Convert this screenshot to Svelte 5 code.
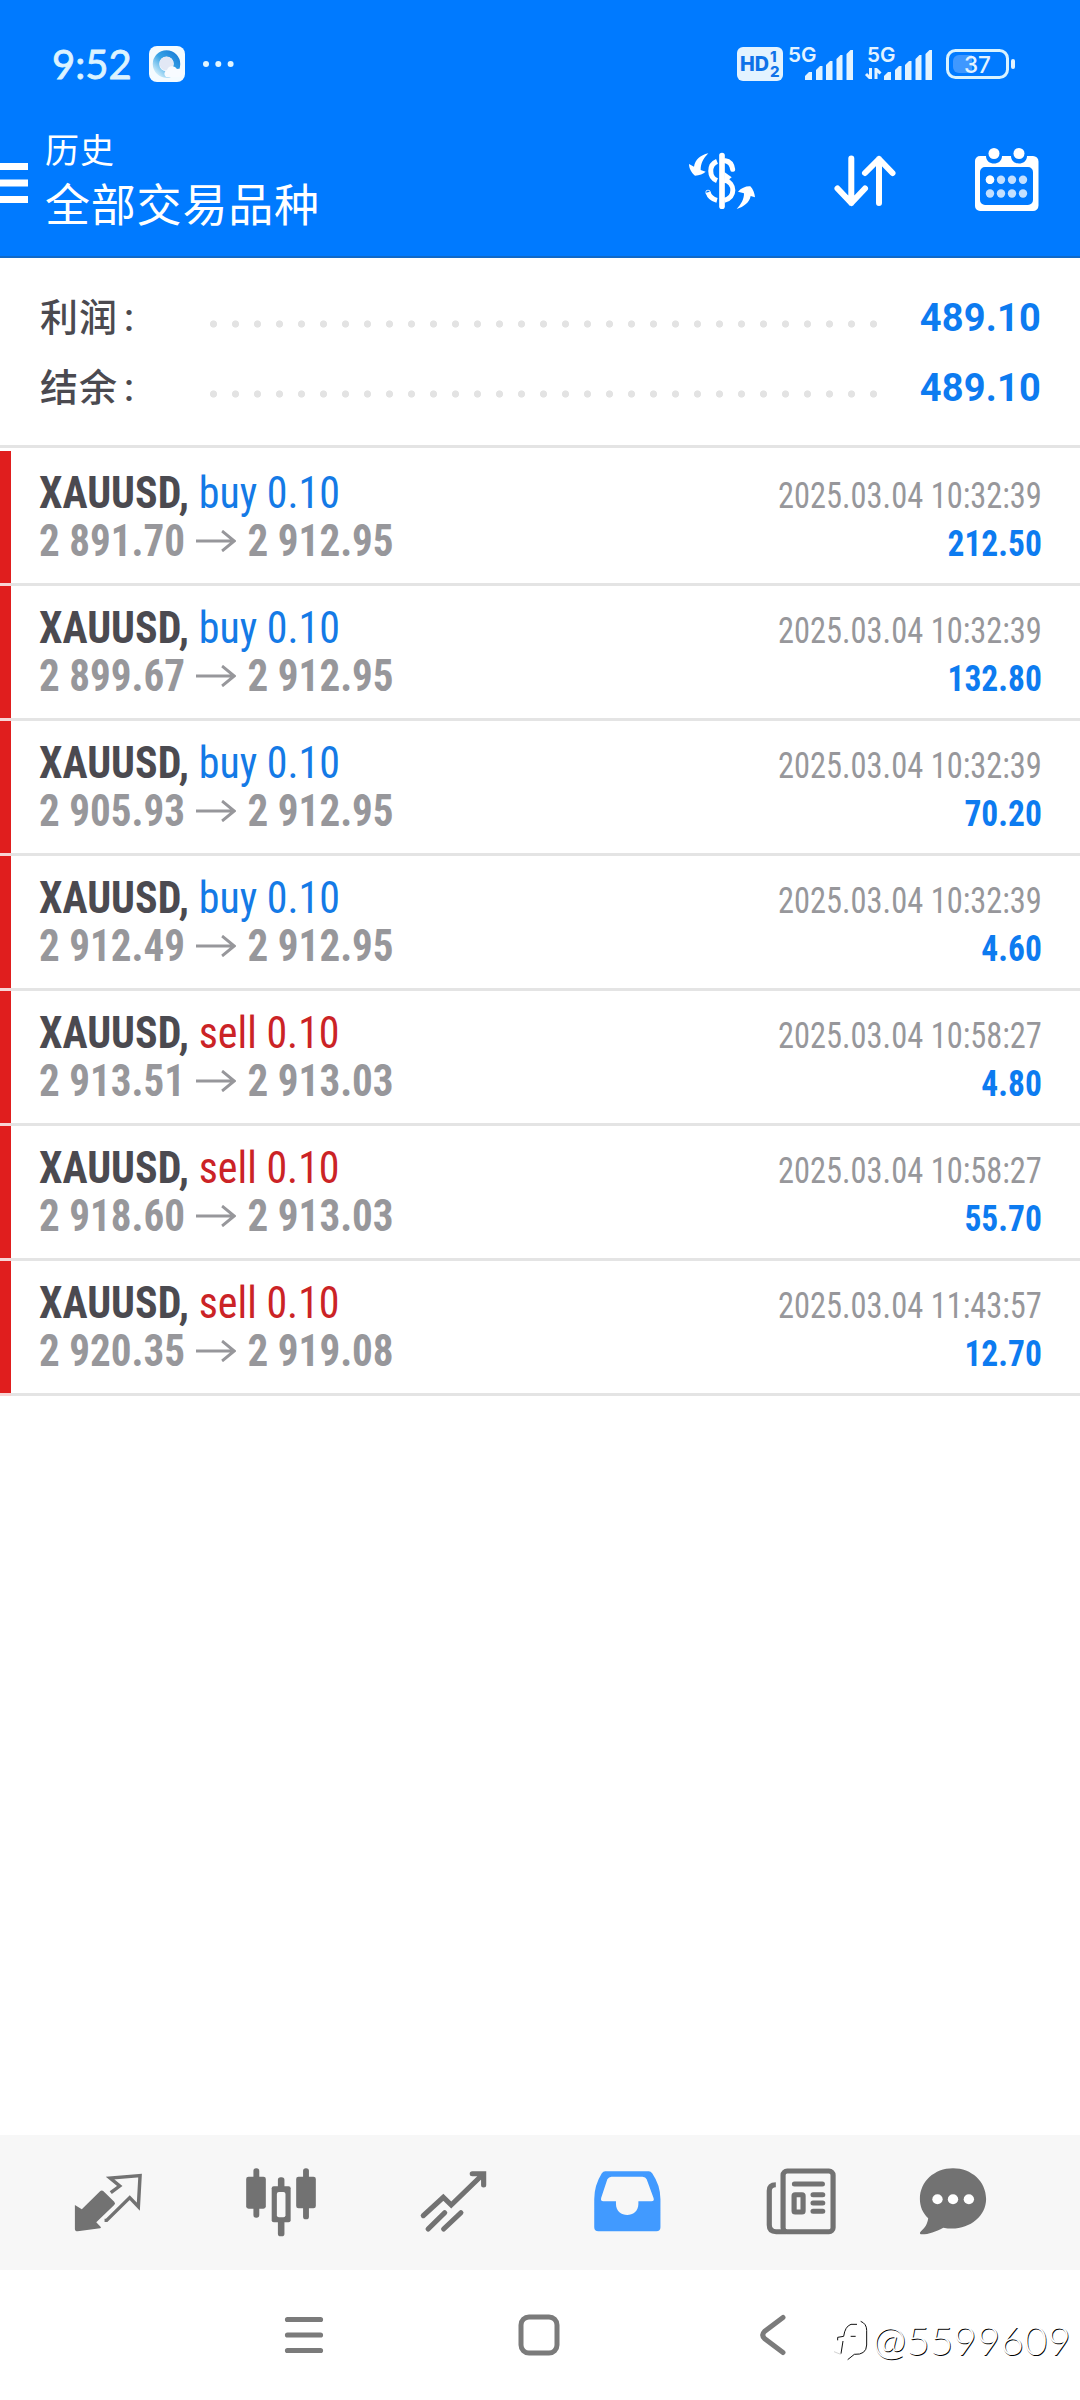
<script>
  const summary = [
    { label: '利润', value: '489.10' },
    { label: '结余', value: '489.10' },
  ];

  const deals = [
    { symbol: 'XAUUSD', side: 'buy', volume: '0.10', open: '2 891.70', close: '2 912.95', time: '2025.03.04 10:32:39', profit: '212.50' },
    { symbol: 'XAUUSD', side: 'buy', volume: '0.10', open: '2 899.67', close: '2 912.95', time: '2025.03.04 10:32:39', profit: '132.80' },
    { symbol: 'XAUUSD', side: 'buy', volume: '0.10', open: '2 905.93', close: '2 912.95', time: '2025.03.04 10:32:39', profit: '70.20' },
    { symbol: 'XAUUSD', side: 'buy', volume: '0.10', open: '2 912.49', close: '2 912.95', time: '2025.03.04 10:32:39', profit: '4.60' },
    { symbol: 'XAUUSD', side: 'sell', volume: '0.10', open: '2 913.51', close: '2 913.03', time: '2025.03.04 10:58:27', profit: '4.80' },
    { symbol: 'XAUUSD', side: 'sell', volume: '0.10', open: '2 918.60', close: '2 913.03', time: '2025.03.04 10:58:27', profit: '55.70' },
    { symbol: 'XAUUSD', side: 'sell', volume: '0.10', open: '2 920.35', close: '2 919.08', time: '2025.03.04 11:43:57', profit: '12.70' },
  ];
</script>

<div class="screen">
  <header>
    <div class="status">
      <span class="clock">9:52</span>
      <svg class="app-icon" viewBox="0 0 36 36">
        <defs>
          <linearGradient id="ring" x1="1" y1="0" x2="0" y2="1">
            <stop offset="0" stop-color="#1b7fd8" />
            <stop offset="0.5" stop-color="#38a4e6" />
            <stop offset="1" stop-color="#d8f1fb" />
          </linearGradient>
        </defs>
        <rect width="36" height="36" rx="8" fill="#f4fbff" />
        <circle cx="17.500" cy="18" r="10.500" fill="none" stroke="url(#ring)" stroke-width="6.500" />
        <circle cx="17.500" cy="17.500" r="7" fill="#e2e8f5" />
        <path d="M17 31a4 4 0 0 1 1-7a5.500 5.500 0 0 1 10-1a4 4 0 0 1 3 8z" fill="#f8fbff" />
      </svg>
      <svg class="more" viewBox="0 0 32 8" fill="#e2f6ff">
        <circle cx="4" cy="4" r="3" />
        <circle cx="16.300" cy="4" r="3" />
        <circle cx="28.600" cy="4" r="3" />
      </svg>
      <svg class="signals" viewBox="735 40 285 48" fill="#e3f3ff">
        <rect x="737" y="47" width="46" height="34" rx="6" />
        <text class="bold" x="740" y="71" font-size="20" textLength="29" lengthAdjust="spacingAndGlyphs" fill="#0f72e8">HD</text>
        <text class="bold" x="770" y="62" font-size="15" fill="#0f72e8">1</text>
        <text class="bold" x="770" y="77" font-size="15" fill="#0f72e8">2</text>
        <text x="788" y="62" font-size="20.500" textLength="28.500" lengthAdjust="spacingAndGlyphs">5G</text>
        <text x="867" y="62" font-size="20.500" textLength="28.500" lengthAdjust="spacingAndGlyphs">5G</text>
        {#each [0, 79] as dx}
          <g transform="translate({dx} 0)">
            <path d="M805 80v-4l4-4h3v8z" />
            <path d="M816 80v-10l4-4h2.500v14z" />
            <path d="M826 80v-15l4-4h2.500v19z" />
            <path d="M836.500 80v-21l4-4h2v25z" />
            <path d="M846.500 80v-26l4-4h2.500v30z" />
          </g>
        {/each}
        <path d="M870.500 68v11M866 74l4 4M876 79v-11M876 69l4.500 4.500" fill="none" stroke="#e3f3ff" stroke-width="3" />
        <rect x="947.500" y="50.500" width="60" height="27" rx="8" fill="none" stroke="#d9f3ff" stroke-width="3" />
        <path d="M959 55h13v18h-13a6 6 0 0 1-6-6v-6a6 6 0 0 1 6-6z" fill="#3f98ff" />
        <rect x="1011" y="59" width="4" height="10" rx="2" />
        <text class="level" x="964" y="72.500" font-size="23.500" textLength="27" lengthAdjust="spacingAndGlyphs">37</text>
      </svg>
    </div>
    <div class="toolbar">
      <svg class="menu" viewBox="0 0 28 42" fill="#fff">
        <rect y="1" width="28" height="7" />
        <rect y="17.500" width="28" height="7" />
        <rect y="34" width="28" height="7" />
      </svg>
      <div class="titles">
        <div class="title">历史</div>
        <div class="filter">全部交易品种</div>
      </div>
      <svg class="action" viewBox="39 21 240 216" fill="#fff">
        <path d="M115 40C90 46 76 58 72 80L57 72C57 85 64 98 75 107C88 106 100 102 107 95L92 90C92 70 100 55 115 40z" />
        <path d="M200 207C222 200 238 188 242 168L255 172C254 160 249 147 241 139C228 138 214 144 204 155L222 160C222 178 214 192 200 207z" />
        <rect x="147.500" y="38" width="17" height="169" rx="8.500" />
        <g fill="none" stroke="#fff" stroke-width="15">
          <path d="M141 64C116 74 116 112 141 122M163 120C197 128 197 174 163 181" />
          <path d="M166 62C180 64 186 74 188 88" stroke-linecap="round" />
          <path d="M141 181C128 178 118 170 114 157" />
          <circle cx="114" cy="157" r="1" stroke-width="13" />
        </g>
        <path d="M163 96l22 16l-22 18z" />
      </svg>
      <svg class="action" viewBox="825 147 80 72" fill="none" stroke="#fff" stroke-width="6" stroke-linecap="round" stroke-linejoin="round">
        <path d="M851.300 158.500V203M837.500 188.500L851.300 203L865 188.500" />
        <path d="M879 203V159M865 173L879 159L892.500 173" />
      </svg>
      <svg class="action" viewBox="967 143 80 80" fill="#fff">
        <path fill-rule="evenodd" d="M980 156h6c0 10 16 10 16 0h9c0 10 16 10 16 0h6a5.500 5.500 0 0 1 5.500 5.500v44a5.500 5.500 0 0 1-5.500 5.500h-53a5 5 0 0 1-5-5v-45a5 5 0 0 1 5-5zM985 167a5 5 0 0 0-5 5v28a5 5 0 0 0 5 5h43a5 5 0 0 0 5-5v-28a5 5 0 0 0-5-5z" />
        <circle cx="994" cy="153.500" r="5.500" />
        <circle cx="1019" cy="153.500" r="5.500" />
        <g fill="#c3e0ff">
          {#each [990, 1001, 1012, 1023] as cx}
            <circle {cx} cy="179.700" r="4.200" />
            <circle {cx} cy="193.500" r="4.200" />
          {/each}
        </g>
        <circle cx="990" cy="179.700" r="4.300" />
      </svg>
    </div>
  </header>

  <section class="summary">
    {#each summary as item}
      <div class="line">
        <span class="label">{item.label}<i>:</i></span>
        <span class="dots"></span>
        <b>{item.value}</b>
      </div>
    {/each}
  </section>

  <ul class="deals">
    {#each deals as deal}
      <li>
        <div class="info">
          <div class="order"><b>{deal.symbol},</b> <span class={deal.side}>{deal.side} {deal.volume}</span></div>
          <div class="prices">
            {deal.open}
            <svg viewBox="0 0 43 22" fill="none" stroke="#97979b" stroke-width="3">
              <path d="M0 11h41M28 1l13 10l-13 10" />
            </svg>
            {deal.close}
          </div>
        </div>
        <div class="result">
          <div class="time">{deal.time}</div>
          <div class="profit">{deal.profit}</div>
        </div>
      </li>
    {/each}
  </ul>

  <nav>
    <svg viewBox="198 128 232 240" preserveAspectRatio="none" fill="#727272">
      <path d="M218 254l20 13l53-54q5-5 10 0l31 31q5 5 0 10l-52 52l13 14q2 3-2 4l-65 9q-8 0-8-7z" />
      <path d="M322 217l26-20l-28-24l87-7l-5 93l-25-27l-67 68h-6" fill="none" stroke="#727272" stroke-width="10" />
    </svg>
    <svg viewBox="700 128 232 240" preserveAspectRatio="none" fill="#727272">
      <rect x="736" y="144" width="17" height="148" rx="8" />
      <rect x="715" y="169" width="57" height="96" rx="7" />
      <rect x="880" y="144" width="17" height="153" rx="8" />
      <rect x="860" y="169" width="57" height="95" rx="7" />
      <rect x="807" y="171" width="19" height="177" rx="8" />
      <rect x="789" y="198" width="55" height="108" rx="6" />
      <rect x="804" y="215" width="25" height="76" rx="6" fill="#f7f7f7" />
    </svg>
    <svg viewBox="1204 128 232 240" preserveAspectRatio="none" fill="none" stroke="#727272" stroke-width="15" stroke-linecap="round">
      <path d="M1231 286l58-55l23 23l92-92M1373 160h33v34" />
      <path d="M1245 326l48-49M1290 326l50-49" />
    </svg>
    <svg viewBox="137 128 232 240" preserveAspectRatio="none" fill="#419aff">
      <path fill-rule="evenodd" d="M190 153h126q6 0 10 6q24 36 24 78v84q0 12-12 12h-168q-12 0-12-12v-84q0-42 22-78q4-6 10-6zM208 169q-8 0-12 8l-18 56q-2 10 6 10h37v8c0 44 65 44 65 0v-8h38q9 0 6-10l-20-56q-3-8-12-8z" />
    </svg>
    <svg viewBox="641 128 232 240" preserveAspectRatio="none" fill="none" stroke="#727272" stroke-width="15">
      <rect x="705" y="152" width="145" height="182" rx="12" />
      <path d="M684 193q-19 0-19 18v103q0 20 20 20h30" />
      <rect x="737" y="223" width="26" height="52" rx="3" />
      <path d="M738 191h81M792 223h28M792 248h28M792 273h28" stroke-linecap="round" />
    </svg>
    <svg viewBox="1083 128 232 240" preserveAspectRatio="none" fill="#727272">
      <path d="M1199 144c54 0 96 40 96 92c0 58-60 100-124 86c-22 12-42 20-62 20c-6 0-8-4-4-8c14-12 20-24 22-40c-16-16-24-36-24-58c0-52 42-92 96-92z" />
      <circle cx="1154" cy="237" r="15" fill="#fff" />
      <circle cx="1199" cy="237" r="15" fill="#fff" />
      <circle cx="1245" cy="237" r="15" fill="#fff" />
    </svg>
  </nav>

  <footer>
    <svg viewBox="0 0 80 80" fill="none" stroke="#7b7b7b" stroke-width="5.200" stroke-linecap="round">
      <path d="M23.500 24.500h33M23.500 40h33M23.500 55.500h33" />
    </svg>
    <svg viewBox="0 0 80 80" fill="none" stroke="#7b7b7b" stroke-width="5">
      <rect x="22" y="22" width="36" height="36" rx="8" />
    </svg>
    <svg viewBox="0 0 80 80" fill="none" stroke="#7b7b7b" stroke-width="5" stroke-linecap="round">
      <path d="M50 22.500L31.500 36.500q-3.500 3.500 0 7L50 57.500" />
    </svg>
    <div class="watermark">
      <svg viewBox="36 36 117 138" fill="none" stroke="#111" stroke-width="3">
        <path d="M53 106v-9l18-3q4-30 22-36h18M69 108l-6 38M92 94h15M83 164l20-16q36 2 37-28V76q0-20-18-27" />
        <path d="M42 140l20 8" stroke="#bbb" stroke-width="2" />
      </svg>
      <span>@5599609</span>
    </div>
  </footer>
</div>

<style>
  :global(body) {
    margin: 0;
    background: #fff;
  }

  .screen {
    display: flex;
    flex-direction: column;
    width: 1080px;
    height: 2400px;
    overflow: hidden;
    background: #fff;
    color: #4b4a50;
    font-family: Roboto, 'Noto Sans CJK SC', sans-serif;
  }

  svg {
    display: block;
    flex: none;
  }

  header {
    box-sizing: border-box;
    height: 258px;
    background: #007aff;
    border-bottom: 2px solid #1069c8;
    color: #fff;
  }

  .status {
    display: flex;
    align-items: center;
    height: 128px;
    padding-left: 52px;
  }

  .clock {
    width: 97px;
    color: #dcf3ff;
    font-family: Lato, sans-serif;
    font-size: 40px;
    -webkit-text-stroke: 0.800px #dcf3ff;
  }

  .app-icon {
    width: 36px;
    height: 36px;
  }

  .more {
    width: 32px;
    height: 8px;
    margin-left: 17px;
  }

  .signals {
    width: 285px;
    height: 48px;
    margin-left: auto;
    margin-right: 60px;
  }

  .signals text {
    font-family: Inter, sans-serif;
    font-weight: 600;
  }

  .signals .bold {
    font-weight: 800;
  }

  .signals .level {
    font-weight: 500;
  }

  .toolbar {
    display: flex;
    align-items: center;
    height: 110px;
  }

  .menu {
    width: 28px;
    height: 42px;
  }

  .titles {
    flex: 1;
    margin-left: 17px;
  }

  .title {
    font-size: 34px;
    line-height: 44px;
    letter-spacing: 1px;
  }

  .filter {
    margin-bottom: -3px;
    font-size: 45px;
    line-height: 68px;
    letter-spacing: 0.800px;
  }

  .action {
    width: 80px;
    margin-right: 62px;
  }

  .action:last-child {
    margin-right: 33px;
  }

  .summary {
    box-sizing: border-box;
    height: 190px;
    padding: 25px 39px 0 40px;
    border-bottom: 3px solid #e4e4e4;
  }

  .line {
    display: flex;
    align-items: center;
    height: 70px;
    font-size: 38px;
  }

  .label {
    width: 167px;
    margin-top: -8px;
    font-weight: 500;
    letter-spacing: 1px;
  }

  .label i {
    margin-left: 6px;
    font-style: normal;
  }

  .dots {
    width: 682px;
    height: 8px;
    margin-top: 12px;
    background: radial-gradient(circle at 6.500px 4px, #e3e3e3 3.200px, transparent 4px) 0 0 / 22px 8px;
  }

  .line b {
    margin-left: auto;
    color: #0d7bf0;
    letter-spacing: 0.200px;
  }

  .deals {
    flex: 1;
    margin: 0;
    padding: 3px 0 0;
    list-style: none;
    font-family: 'Roboto Condensed', Roboto, sans-serif;
    font-stretch: 75%;
    font-size: 44px;
    line-height: 48px;
  }

  li {
    display: flex;
    justify-content: space-between;
    box-sizing: border-box;
    height: 135px;
    padding: 18px 38px 0 39px;
    background:
      linear-gradient(#f7d5d5, #f7d5d5) 0 100% / 11px 3px no-repeat,
      linear-gradient(#e4e4e4, #e4e4e4) 0 100% / 100% 3px no-repeat,
      linear-gradient(#e01e1e, #e01e1e) 0 0 / 11px 100% no-repeat;
  }

  /* squeezed a bit further than the condensed face goes */
  .order {
    transform: scaleX(0.953);
    transform-origin: left;
  }

  .buy {
    color: #147ae6;
  }

  .sell {
    color: #cb2326;
  }

  .prices {
    display: flex;
    align-items: center;
    gap: 12px;
    color: #97979b;
    font-weight: 700;
    transform: scaleX(0.934);
    transform-origin: left;
  }

  .prices svg {
    width: 43px;
    height: 22px;
  }

  .result {
    padding-top: 3px;
    font-size: 36px;
    text-align: right;
  }

  .time {
    color: #97979b;
    transform: scaleX(0.901);
    transform-origin: right;
  }

  .profit {
    color: #0d7bf0;
    font-weight: 700;
    transform: scaleX(0.93);
    transform-origin: right;
  }

  nav {
    display: grid;
    grid-template-columns: repeat(4, 173.300px) 152px 80px;
    align-items: center;
    box-sizing: border-box;
    height: 135px;
    padding-left: 67.500px;
    background: #f7f7f7;
  }

  nav svg,
  footer > svg {
    width: 80px;
    height: 80px;
  }

  footer {
    position: relative;
    display: flex;
    gap: 154.500px;
    box-sizing: border-box;
    height: 130px;
    padding: 25px 0 0 264px;
  }

  .watermark {
    position: absolute;
    right: 9px;
    bottom: 36px;
    display: flex;
    align-items: center;
    color: #fff;
    font-family: Lato, sans-serif;
    font-size: 40px;
    font-weight: 300;
    line-height: 48px;
    letter-spacing: 0.300px;
    text-shadow: 0.700px 0.700px 0 #000;
  }

  .watermark svg {
    width: 39px;
    height: 46px;
    margin-right: 2px;
  }
</style>
